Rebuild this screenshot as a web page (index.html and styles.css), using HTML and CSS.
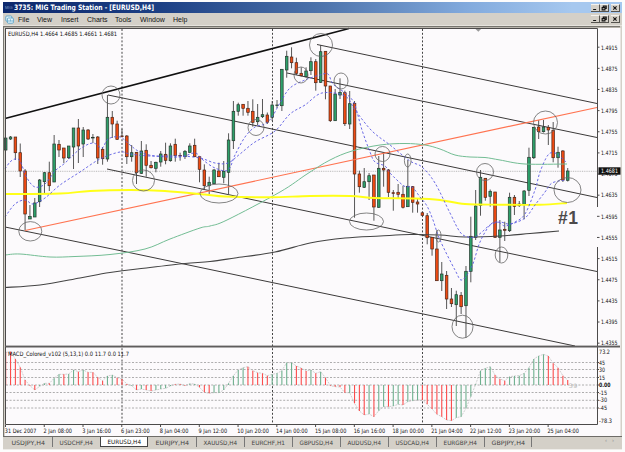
FILE: index.html
```html
<!DOCTYPE html>
<html lang="en">
<head>
<meta charset="utf-8">
<title>3735: MIG Trading Station - [EURUSD,H4]</title>
<link rel="stylesheet" href="styles.css">
</head>
<body>
<div class="window">
  <header class="titlebar">
    <span class="mig">MIG</span>
    <svg class="title" width="150" height="11"><text x="0" y="8.3" textLength="140" lengthAdjust="spacingAndGlyphs">3735: MIG Trading Station - [EURUSD,H4]</text></svg>
    <div class="controls">
      <svg class="btn" viewBox="0 0 9 8"><path d="M2 6h4"/></svg>
      <svg class="btn" viewBox="0 0 9 8"><path d="M3.5 3V1.5h4v3H6M2 3.5h3.8v3H2z"/></svg>
      <svg class="btn gap" viewBox="0 0 9 8"><path d="M2.2 1.7l4.4 4.6M6.6 1.7L2.2 6.3"/></svg>
    </div>
  </header>
  <nav class="menubar">
    <svg class="app-icon" viewBox="0 0 9 9"><rect x=".8" y="1" width="6" height="5.2" rx="1"/><rect x="2.4" y="3" width="6" height="5.2" rx="1"/><path d="M4 5v2M5.5 4.3v2.4M7 5v2"/></svg>
    <span class="menu file">File</span><span class="menu view">View</span><span class="menu insert">Insert</span><span class="menu charts">Charts</span><span class="menu tools">Tools</span><span class="menu win">Window</span><span class="menu help">Help</span>
    <div class="controls">
      <svg class="btn" viewBox="0 0 9 8"><path d="M2 6h4"/></svg>
      <svg class="btn" viewBox="0 0 9 8"><path d="M3.5 3V1.5h4v3H6M2 3.5h3.8v3H2z"/></svg>
      <svg class="btn gap" viewBox="0 0 9 8"><path d="M2.2 1.7l4.4 4.6M6.6 1.7L2.2 6.3"/></svg>
    </div>
  </nav>
  <main class="workspace">
    <svg class="chart" id="chart" width="619" height="411" viewBox="3 25 619 411">
      <rect class="edge" x="3" y="25" width="619" height="1"/>
      <rect class="edge-dark" x="3" y="26" width="617" height="1.3"/>
      <rect class="edge-dark" x="3" y="26" width="1" height="410"/>
      <rect class="paper" x="5" y="28" width="615.5" height="408"/>
      <g id="grid"></g>
      <g class="channels">
        <path class="thick" d="M5 118.5L349 28.5"/>
        <path d="M108 95L210 116L440 164.3L597 197.5M317 44.5L597 103.5M287 73L597 137.5M107 169L280 205.5L440 239L597 271.5M5 227L122 251L260 280L440 317.5L575 346"/>
      </g>
      <g id="candles"></g>
      <path class="price-trend" d="M25 230.5L597 107.5"/>
      <g id="averages"></g>
      <g id="marks"></g>
      <path d="M475.5 29h5.6l-2.8 2.8z" fill="#999"/>
      <rect class="paper" x="560" y="208" width="40" height="38.5"/>
      <text class="note" x="558" y="223.5" textLength="20">#1</text>
      <path class="frame" d="M5.5 28V346M5 28.5H597.5V207M597.5 247V346M597.5 347V424.5"/>
      <rect class="divider" x="5" y="345.6" width="615" height="1.9"/>
      <g id="macd"></g>
      <path class="frame" d="M5.5 347V424.5H597.5"/>
      <g id="axes"></g>
    </svg>
  </main>
  <footer class="tabs" id="tabs"></footer>
</div>
<script src="chart.js"></script>
</body>
</html>
```
FILE: styles.css
```css
* { box-sizing: border-box; }
body {
  margin: 0;
  background: #fdfcfc;
  font-family: "Liberation Sans", Arial, sans-serif;
  overflow: hidden;
}
.window {
  width: 619px;
  height: 448px;
  margin: 2px 0 0 3px;
  display: flex;
  flex-direction: column;
  background: #d4d0c8;
}
.titlebar {
  flex: 0 0 11px;
  display: flex;
  align-items: center;
  padding-left: 2px;
  background: linear-gradient(90deg, #0d286c 0%, #1c3f84 25%, #4a70a8 50%, #82aadd 75%, #a6c8ef 92%);
}
.mig { width: 9px; font-size: 4px; color: #7f96be; }
.title { overflow: visible; }
.title text { font: bold 7.4px "DejaVu Sans", sans-serif; fill: #fff; }
.controls { margin-left: auto; padding-right: 2px; display: flex; }
.btn {
  width: 9px;
  height: 8px;
  background: #d4d0c8;
  border-right: 1px solid #55534f;
  border-bottom: 1px solid #55534f;
  border-top: 1px solid #f4f2ee;
}
.btn.gap { margin-left: 2px; }
.btn path { fill: none; stroke: #111; stroke-width: 1.4; }
.menubar {
  flex: 0 0 12px;
  display: flex;
  align-items: center;
  padding-left: 2px;
  font-size: 7px;
  color: #111;
}
.app-icon { width: 9px; height: 9px; margin-right: 4px; }
.app-icon rect { fill: #e8f6fb; stroke: #4b9cc4; stroke-width: .8; }
.app-icon path { stroke: #4b9cc4; stroke-width: .7; }
.menu { white-space: nowrap; }
.file { width: 19px; }
.view { width: 24px; }
.insert { width: 26px; }
.charts { width: 28px; }
.tools { width: 25px; }
.win { width: 33px; }
.help { width: 20px; }
.workspace { flex: 0 0 411px; }
.chart { display: block; }
.edge { fill: #e6e3dd; }
.edge-dark { fill: #77756f; }
.paper { fill: #fcfafc; }
.channels path { fill: none; stroke: #3c3a3a; stroke-width: 1; }
.channels .thick { stroke: #111; stroke-width: 1.6; }
.price-trend { fill: none; stroke: #ff7350; stroke-width: 1.2; }
.wick { stroke: #444; stroke-width: .9; }
.up { fill: #2da06a; stroke: #26372d; stroke-width: .7; }
.down { fill: #f04a12; stroke: #4e2617; stroke-width: .7; }
.yellow { stroke: #ffff18; stroke-width: 1.9; }
.green { stroke: #73bd94; stroke-width: 1; }
.dark { stroke: #444; stroke-width: 1.1; }
.blue { stroke: #5a5ae2; stroke-width: .9; stroke-dasharray: 2.4 2; }
#averages path { fill: none; }
#marks ellipse { fill: none; stroke: #666; stroke-width: .8; }
.session { stroke: #444; stroke-width: 1; stroke-dasharray: 2 1.8; }
.bid { stroke: #aaa; stroke-width: .8; stroke-dasharray: 1 .8; }
.level { stroke: #999; stroke-width: .8; stroke-dasharray: 2 1.6; }
.frame { fill: none; stroke: #4c4a4a; stroke-width: 1; }
.divider { fill: #5f5d5d; }
.note { font-size: 17.5px; font-weight: bold; fill: #4c4a4a; }
.label { font: 6px "DejaVu Sans", sans-serif; fill: #111; }
.strong { font-weight: bold; }
.tag { fill: #111; }
.tag-text { fill: #fff; }
.macd-up { stroke: #6fb08f; stroke-width: 1.1; }
.macd-down { stroke: #fb4c4c; stroke-width: 1.1; }
.signal { fill: none; stroke: #bbb; stroke-width: .7; stroke-dasharray: 2 1; }
.faint { fill: #bbb; }
.tabs {
  flex: 0 0 13px;
  display: flex;
  padding: 0 0 2px 1px;
  border-top: 1px solid #6e6c68;
  border-bottom: 1px solid #eeece8;
}
.tab {
  width: 48px;
  display: flex;
  align-items: center;
  justify-content: center;
}
.tab svg { display: block; }
.tab .label { fill: #444; }
.tab.plain + .tab.plain { border-left: 1px solid #777; }
.tab:last-of-type { border-right: 1px solid #777; }
.tab.active { background: #fff; border: 1px solid #444; border-top: 0; }
.tab.active .label { fill: #111; }
.scroll { margin-left: auto; padding-right: 3px; font-size: 6px; color: #999; letter-spacing: 5px; }
```
FILE: chart.js
```js
const NS = "http://www.w3.org/2000/svg";
const add = (parent, tag, attrs, text) => {
  const el = document.createElementNS(NS, tag);
  for (const k in attrs) el.setAttribute(k, attrs[k]);
  if (text !== undefined) el.textContent = text;
  parent.appendChild(el);
  return el;
};
const $ = id => document.getElementById(id);
const barX = i => 5.7 + 4.845 * i;

// direction, high, body top, body bottom, low
const candles = `G 138 138 150 151|G 136 137 139 140|R 137 137 152.7 160|R 143.5 152.7 171 177|R 169 171 214 230|G 205 216.5 219 219|G 198 203 217 217|G 179 180 201.7 207|G 172 172.7 181.7 193|R 161.7 172.7 185.7 191
G 135 144 182 182|R 140 144.3 150 157|R 148 148 158 163|G 146 146 157.7 159|G 128 128 147 169|R 119 128 146 163|G 127 130 144 157|R 129 130 139 140|G 134 137.3 138 143|R 136 137 158 164
R 147 149.3 158.7 164.7|G 95 117.3 159 161.7|R 111 117.3 124 138|R 120.7 124 139.3 140|R 129 136 136.5 137|R 135 136 156.7 164|G 145 152.7 156.7 161.7|R 152 152.3 172.7 184|G 141 151 173.3 174|R 144.3 150.3 165.3 176.7
R 161 165.3 167.7 168.5|G 161.7 162.3 168.3 172.3|G 151 154 162 166.7|R 142.7 154.3 160.3 164.3|G 143.3 146 160.7 161.7|R 138.7 144.3 155.7 161.7|R 152.7 155.5 156 160.7|G 150 151.3 156.7 159|G 143.3 146 152.3 153|R 138.7 145.3 156.7 157
R 156 156.7 169.3 182.3|R 164.3 170 185.7 189.3|G 176.7 182.3 185.7 194|G 169 170 183.7 184|R 162.7 171 176.7 177|G 161 171.3 177.3 183.3|G 133.3 140 172.3 194|G 101 111.3 140.7 149|G 102.7 104.7 111.3 115.7|R 104 104.3 108.3 115.7
R 101 108.3 112.3 115.7|R 99.3 111.3 122.3 126.7|G 104 117.3 121.7 125|G 99 114.7 116.7 118|R 112.5 115 122.3 124|G 101 105 117.3 121|G 100 105 105.5 108|G 69 69.3 105.7 111|G 50.7 56.3 70 77.7|R 47.3 57 62.7 68.3
R 57.7 62.7 73.3 75|R 67.3 73.3 75.7 76.5|G 67.3 71 76.7 77.5|G 57.3 61.7 70.7 75|R 59 61.7 82.7 90.7|G 45 51.7 82.3 83|R 51 51.3 86 99.3|R 86 86 120.7 122|G 89 94 120.7 121|G 78.3 92.3 95 99
R 90.7 92.7 123.7 126|G 91 103.7 124 129|R 101 103.3 174 217.7|R 170.7 174 186.7 192.7|G 168 181.7 187.3 188|G 173 175.7 181.7 200|R 175 175 207 220.7|G 156 168.3 207.3 208|R 152.7 168.3 170 186.7|R 169 170 192.3 197
R 190 192.7 193.4 210.7|R 184 192.3 194.3 199|R 185.7 194.3 207.3 208.5|G 160 186.3 206.7 207|R 186 186.7 202.3 212.7|R 198 202 204 212.7|R 211.5 212.8 215.3 216|R 213 215.7 237.7 244.3|R 237 237.3 249 255.7|R 230 249 280.7 281
G 262 274 280.7 291|R 271 275.3 299 309|R 288 299 303.7 307|G 290.7 294.7 304.7 326|R 292 295.3 306.7 314|G 266 271.3 305.7 337.7|G 216.7 236.3 271.3 282.3|G 190 206 237.3 240|G 170 177.3 205.3 215.7|R 178 178.3 197.3 200.7
G 189.5 191.3 196.3 206.7|R 192 192 237.3 238|G 220 230 237.3 262|R 221.7 229.3 230.3 241|G 192.7 197.3 230.7 232|R 195 197.3 206.3 215|G 201 204 205.7 207|G 190 191 204.3 219.3|G 147.7 157.3 190.3 196|G 127 127.3 157.7 159
R 120 127 131.7 139|G 120 127 131.7 132.5|R 125 127.3 130 145|R 122 130.3 157.7 162.3|G 146.7 152.3 157.7 167.7|R 150 151 180 182|G 168 171 180.3 181.5`
  .split(/[|\n]/).map(s => s.trim().split(" "));

candles.forEach(([dir, high, top, bottom, low], i) => {
  const x = barX(i), g = $("candles");
  add(g, "line", { class: "wick", x1: x, x2: x, y1: high, y2: low });
  add(g, "rect", { class: dir === "G" ? "up" : "down", x: x - 1.3, y: top, width: 2.6, height: Math.max(.5, bottom - top) });
});

// Smooth curve through a list of points
const smooth = pts => {
  let d = `M${pts[0]}`;
  for (let i = 0; i < pts.length - 1; i++) {
    const a = pts[i - 1] || pts[i], b = pts[i], c = pts[i + 1], e = pts[i + 2] || c;
    d += `C${b[0] + (c[0] - a[0]) / 6} ${b[1] + (c[1] - a[1]) / 6} ${c[0] - (e[0] - b[0]) / 6} ${c[1] - (e[1] - b[1]) / 6} ${c[0]} ${c[1]}`;
  }
  return d;
};
const averages = [
  ["green", "5,255 20,254 50,257 75,256.5 110,254.5 145,249 170,239 200,228 210,226 227,220 280,192 307,174 330,160 352,151 380,145 405,143.5 425,145 440,149 455,155 470,157 485,157.5 500,160 525,164 567,164"],
  ["dark", "5,287.5 40,285 80,278 110,272.5 150,267.5 185,263.5 210,261.5 235,258 275,252 310,243 345,238 380,236 410,234.5 440,235 465,237 500,236 530,233.5 559,231"],
  ["yellow", "5,194 60,193.5 90,191 130,190 165,191 205,194.5 225,196.5 270,197.3 310,196 350,196 375,198 415,198.5 440,200 465,204 500,204.7 540,204.7 567,203"],
  ["blue", "5,169 10,162 15,159 20,161 27,178 35,187 45,184 55,171 65,163 80,149 93,143 102,148 108,139 120,137 130,145 140,152 155,156 180,157 195,153 203,160 215,168 228,170 235,155 245,137 255,127 265,124 272,117 280,103 290,88 305,80 320,75 328,74 333,84 345,93 354,103 362,130 370,152 375,162 385,166 390,173 404,186 412,187 420,197 427,206 433,220 440,240 455,270 462,280 472,266 480,242 490,225 498,222 505,226 515,222 525,214 535,190 540,172 548,155 555,153 562,158 566,162"],
  ["blue", "5,217 15,204 25,200 33,204 45,198 60,185 80,172 100,159 120,152 130,154 150,156 180,156 200,158 215,163 228,163 240,154 255,142 275,131 290,114 305,105 322,93 345,96 355,110 372,131 390,145 410,161 422,167 435,183 450,213 460,232 468,237 475,237 482,232 490,225 500,222 510,224 525,218 535,205 545,192 552,183 565,180"]
];
averages.forEach(([cls, pts]) =>
  add($("averages"), "path", { class: cls, d: smooth(pts.split(" ").map(p => p.split(",").map(Number))) }));

[[111, 95, 9, 9], [143.5, 180.5, 11, 10.5], [219, 193.5, 19, 9.5], [256, 127.5, 8, 8], [30.3, 231.3, 11.5, 9.7],
 [321, 45, 11.5, 11.5], [301, 75, 7, 8], [341, 81, 7, 8], [382.5, 154, 7.5, 7.5], [407.7, 160.5, 3.3, 6.5],
 [366.5, 221.5, 17, 8.5], [438.5, 236, 2.5, 6], [462.5, 326.7, 10.5, 11.5], [501.5, 255, 6.3, 8],
 [485, 172, 8.5, 8.5], [545.5, 122.5, 12, 11.5], [567.5, 190, 13.5, 12.5]]
  .forEach(([cx, cy, rx, ry]) => add($("marks"), "ellipse", { cx, cy, rx, ry }));

[122, 272.5, 422.5].forEach(x => add($("grid"), "line", { class: "session", x1: x, x2: x, y1: 29, y2: 424 }));
add($("grid"), "line", { class: "bid", x1: 6, x2: 598, y1: 171.3, y2: 171.3 });

// MACD histogram: colour and bar end, third-pixel units below y = 340
const macd = `R37 R35 R57 R82 R120 R137 R150 G139 G130 R130 G115 G103 R103 G102 G90 R95 G90 R97 R97 R112 R122 G108 G105 R113 R117 R132 G137 R150 G147 R150 R153 G150 G147 G145 G138 R133 R132 R137 G131 G132 R142 R157 R160 G158 G158 G150 G130 G107 G90 G83 R80 R92 R98 R100 R107 G103 G100 G92 G68 G68 R78 R84 R93 G90 R100 G95 R113 R137 R140 R141 R158 G158 R190 R213 R225 G222 R230 G212 G200 R200 G198 G193 R195 G185 G182 G180 R180 R193 R207 R223 R230 R240 R242 G233 G230 G205 G170 G133 G92 G85 G80 R105 R117 R122 G110 G108 G107 G100 G83 G57 G48 G43 R48 R70 R83 R107 R120`.split(" ");
const zero = 385, m = $("macd");
[362.5, 369.5, 377.5, 385, 392.5, 400.3, 408].forEach(y => add(m, "line", { class: "level", x1: 6, x2: 597, y1: y, y2: y }));
add(m, "polyline", { class: "signal", points: macd.map((b, i) => `${barX(i)},${340 + b.slice(1) / 3}`).join(" ") });
macd.forEach((b, i) => add(m, "line", { class: b[0] === "G" ? "macd-up" : "macd-down", x1: barX(i), x2: barX(i), y1: zero, y2: 340 + b.slice(1) / 3 }));

const axes = $("axes");
const label = (x, y, w, s, cls = "") => add(axes, "text", { class: `label ${cls}`, x, y, textLength: w, lengthAdjust: "spacingAndGlyphs" }, s);
for (let i = 0; i < 15; i++) {
  const y = 47.2 + i * 21.14;
  add(axes, "line", { class: "frame", x1: 597, x2: 599.5, y1: y, y2: y });
  label(601, y + 2.3, 16.5, (1.4915 - i * .004).toFixed(4));
}
add(axes, "rect", { class: "tag", x: 598.5, y: 167.3, width: 22, height: 7.4 });
label(601, 173.3, 17, "1.4681", "tag-text");
[[354.3, "73.2", 11], [364.6, "45", 6], [371.8, "30", 6], [379.8, "15", 6], [387, "0.00", 11.5, "strong"], [394.8, "-15", 8], [402.4, "-30", 8], [410.3, "-45", 8], [423.2, "-78.3", 13]]
  .forEach(([y, s, w, c]) => label(599, y, w, s, c));
[362.5, 369.5, 377.5, 385, 392.5, 400.3, 408].forEach(y => add(axes, "line", { class: "frame", x1: 597, x2: 599, y1: y, y2: y }));
label(568.5, 387.8, 9, "39", "faint");
label(8, 35.5, 109, "EURUSD,H4  1.4664 1.4685 1.4661 1.4681");
label(8, 355.8, 121, "MACD_Colored_v102 (5,13,1) 0.0 11.7 0.0 11.7");
["31 Dec 2007", "2 Jan 08:00", "3 Jan 16:00", "6 Jan 23:00", "8 Jan 04:00", "9 Jan 12:00", "10 Jan 20:00", "14 Jan 00:00", "15 Jan 08:00", "16 Jan 16:00", "18 Jan 00:00", "21 Jan 04:00", "22 Jan 12:00", "23 Jan 20:00", "25 Jan 04:00"]
  .forEach((s, i) => {
    const x = 5.5 + i * 38.76;
    add(axes, "line", { class: "frame", x1: x, x2: x, y1: 425, y2: 427 });
    label(x - .7, 432.8, i && i < 6 ? 28.5 : 31.5, s);
  });

["USDJPY,H4", "USDCHF,H4", "EURUSD,H4", "EURJPY,H4", "XAUUSD,H4", "EURCHF,H1", "GBPUSD,H4", "AUDUSD,H4", "USDCAD,H4", "EURGBP,H4", "GBPJPY,H4"].forEach((s, i) => {
  const tab = document.createElement("div");
  tab.className = "tab " + (i === 2 ? "active" : "plain");
  const svg = add(tab, "svg", { width: 35, height: 9 });
  add(svg, "text", { class: "label", x: .5, y: 6.8, textLength: 33.5, lengthAdjust: "spacingAndGlyphs" }, s);
  $("tabs").appendChild(tab);
});
const scroll = document.createElement("span");
scroll.className = "scroll";
scroll.textContent = "‹›";
$("tabs").appendChild(scroll);
```
